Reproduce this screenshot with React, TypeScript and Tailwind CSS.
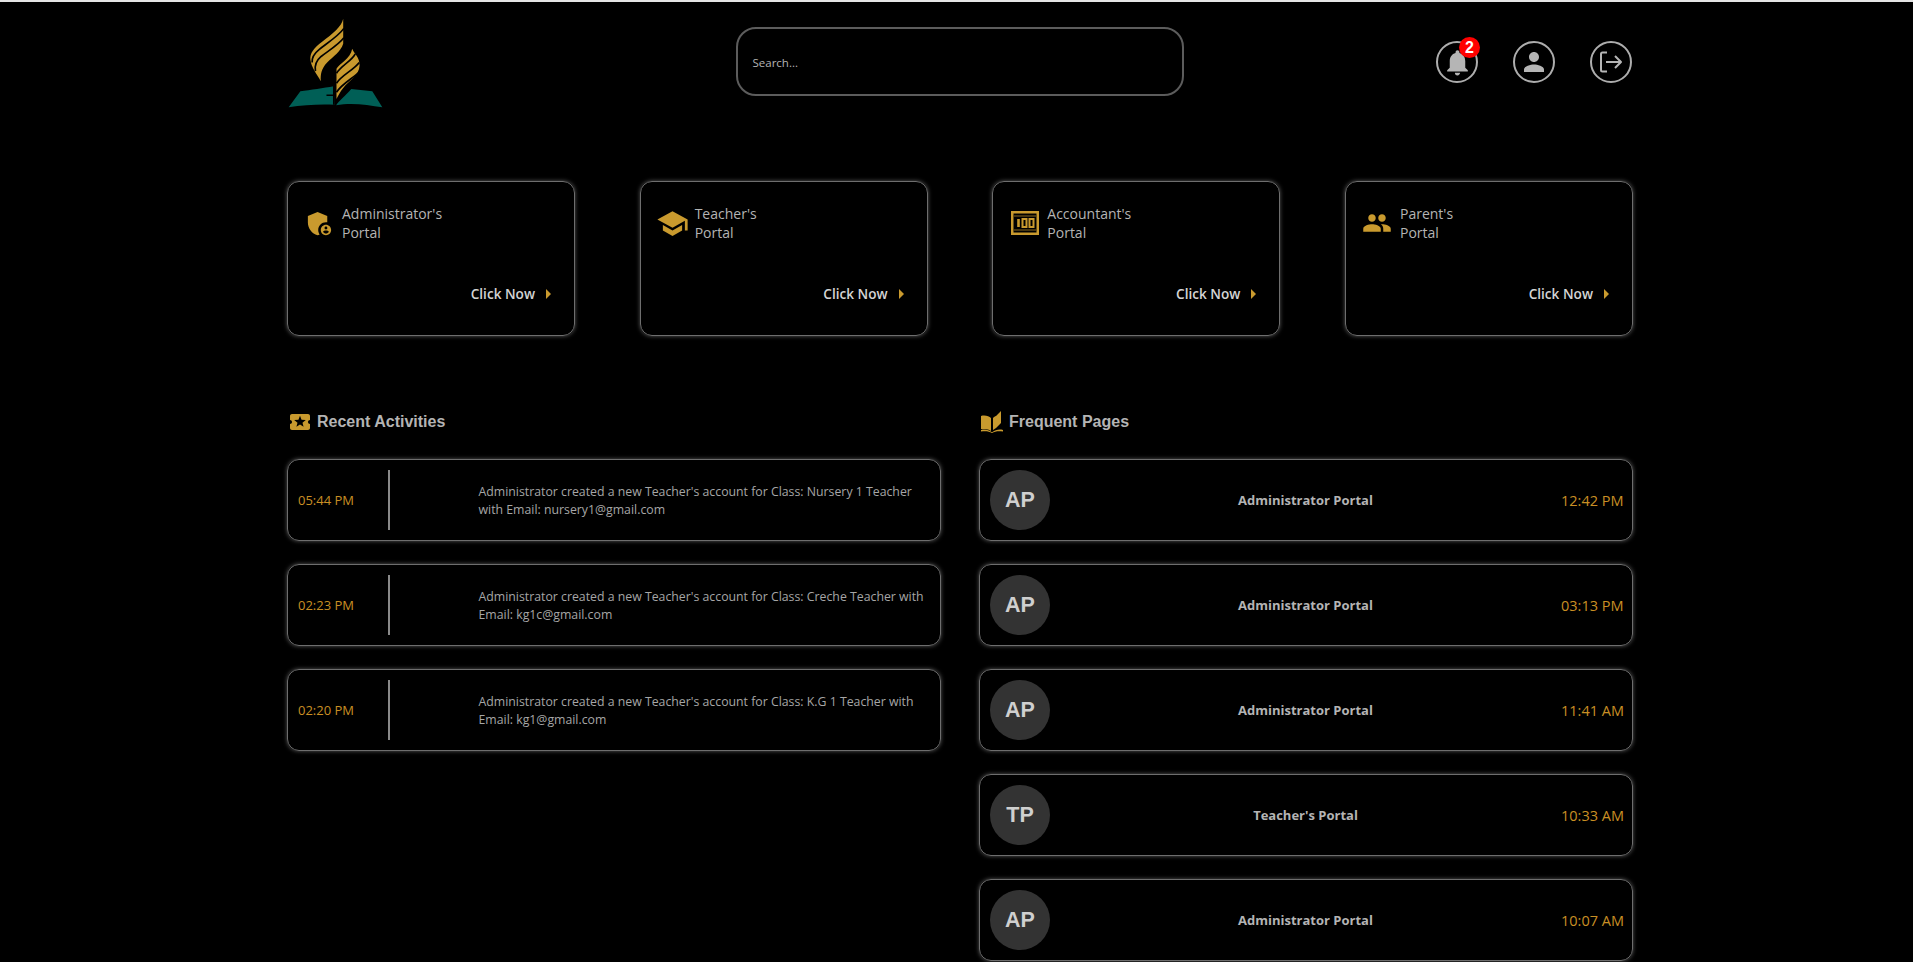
import React from "react";
import { MdAdminPanelSettings, MdSchool, MdPeople, MdLocalActivity, MdNotifications, MdPerson, MdArrowRight } from "react-icons/md";

const body = "font-['Open_Sans','Noto_Sans',sans-serif]";
const panel = "rounded-[12px] border border-[#6e6e6e] shadow-[0_0_4px_#5a5a5a]";

function Logo() {
  return (
    <svg viewBox="50 50 290 275" className="w-[97px] h-[92px]">
      <path fill="#c99a2e" d="M218 55C214 78 186 100 155 124C130 143 118 158 120 178C122 200 140 222 151 242C150 222 152 205 170 186C188 168 210 155 218 130Z" />
      <path fill="none" stroke="#000" strokeWidth="5" d="M220 84C205 106 170 128 145 148C130 160 124 172 125 186" />
      <path fill="none" stroke="#000" strokeWidth="5" d="M220 112C205 132 175 150 152 168C138 180 132 195 135 212" />
      <path fill="#c99a2e" d="M245 145C250 160 268 170 267 195C266 225 235 240 218 262C208 275 203 285 198 295L198 205C205 190 240 175 245 145Z" />
      <path fill="none" stroke="#000" strokeWidth="5" d="M254 160C245 180 212 195 198 218" />
      <path fill="none" stroke="#000" strokeWidth="5" d="M266 186C250 208 212 225 198 248" />
      <path fill="none" stroke="#000" strokeWidth="5" d="M268 212C250 232 215 248 198 275" />
      <path fill="#005f56" d="M55 320L90 272C120 268 160 262 190 257L192 312C150 310 100 312 55 320Z" />
      <path fill="#005f56" d="M197 314C205 300 225 285 242 265L305 272L335 320C290 312 240 305 197 314Z" />
      <path fill="none" stroke="#000" strokeWidth="5" d="M168 284H196M190 256V312" />
    </svg>
  );
}

function HundredIcon() {
  return (
    <svg viewBox="0 0 28 24" className="w-[28px] h-[24px] fill-none stroke-[#c99a2e]">
      <rect x="1.25" y="1.25" width="25.5" height="21.5" strokeWidth="2.5" />
      <path d="M3 5H25M3 19H25" strokeWidth="1" stroke="#8a6a20" />
      <path d="M7.5 8V16" strokeWidth="2.6" />
      <rect x="11.5" y="8" width="4" height="8" strokeWidth="2" />
      <rect x="18.5" y="8" width="4" height="8" strokeWidth="2" />
    </svg>
  );
}

function BookIcon() {
  return (
    <svg viewBox="0 0 24 22" className="w-[24px] h-[22px] fill-[#c99a2e]">
      <path d="M1 5C5 4 9 5 11 7V20C8 18 5 18 1 18Z" />
      <path d="M13 7C14 6 15 5 16 5L21 0V12L16 17L13 19Z" />
      <path d="M22 5H23V19C19 18 15 19 12.5 21H11.5C9 19 5 18 1 19V20.5C5 20 9 20 12 22C15 20 19 20 23 20.5V5Z" />
    </svg>
  );
}

function LogoutIcon() {
  return (
    <svg viewBox="0 0 24 24" className="w-[24px] h-[24px] fill-none stroke-[#b5b5b5]" strokeWidth="2" strokeLinejoin="round">
      <path d="M8 2.5H3.5A1.5 1.5 0 0 0 2 4V20A1.5 1.5 0 0 0 3.5 21.5H8" />
      <path d="M7 12H22M16 6L22 12L16 18" />
    </svg>
  );
}

function PortalCard({ icon, name }: { icon: React.ReactNode; name: string }) {
  return (
    <div className={`w-[288px] h-[155px] ${panel} pl-[18px] pr-[19px] pt-[22px] flex flex-col ${body}`}>
      <div className="flex items-start">
        <div className="w-[36px] h-[38px] flex items-center">{icon}</div>
        <div className="text-[14px] leading-[19px] text-[#b4b4b4]">
          <div>{name}</div>
          <div>Portal</div>
        </div>
      </div>
      <div className="mt-[40px] flex justify-end items-center">
        <span className="text-[13.6px] font-semibold text-[#d4d4d4]">Click Now</span>
        <MdArrowRight className="ml-[1px] mr-[-5px] text-[#c99a2e]" size={24} />
      </div>
    </div>
  );
}

function Activity({ time, text }: { time: string; text: string }) {
  return (
    <div className={`h-[82px] ${panel} flex items-center pl-[10px] pr-[9px] ${body}`}>
      <div className="w-[90px] pt-[1px] text-[13px] text-[#c98f24]">{time}</div>
      <div className="w-[2px] h-[60px] bg-[#8a8a8a]" />
      <div className="ml-[88.5px] flex-1 pt-[1px] text-[12.3px] leading-[18px] text-[#a6a6a6]">{text}</div>
    </div>
  );
}

function Frequent({ badge, title, time }: { badge: string; title: string; time: string }) {
  return (
    <div className={`h-[82px] shrink-0 ${panel} flex items-center pl-[10px] pr-[11px] ${body}`}>
      <div className="w-[60px] h-[60px] rounded-full bg-[#333333] flex items-center justify-center font-['Liberation_Sans',sans-serif] font-bold text-[21.5px] text-[#cfcfcf]">
        {badge}
      </div>
      <div className="flex-1 pt-[1px] text-center text-[13px] font-bold text-[#b4b4b4]">{title}</div>
      <div className="w-[60px] pt-[1px] text-right text-[14.5px] text-[#c98f24] whitespace-nowrap">{time}</div>
    </div>
  );
}

function RoundIcon({ children }: { children: React.ReactNode }) {
  return (
    <div className="relative w-[42px] h-[42px] rounded-full border-2 border-[#adadad] flex items-center justify-center text-[#b5b5b5]">
      {children}
    </div>
  );
}

export default function App() {
  const gold = "text-[#c99a2e]";
  return (
    <div className="h-screen overflow-hidden bg-black border-t-2 border-[#e4e4e4]">
      <div className="w-[1346px] ml-[287px]">
        <header className="h-[179px] flex items-start justify-between">
          <div className="mt-[15px]"><Logo /></div>
          <div className={`mt-[25px] ml-[99px] w-[448px] h-[69px] rounded-[20px] border-2 border-[#5c5c5c] flex items-center pl-[15px] pt-[3px] text-[11.5px] text-[#b4b4b4] ${body}`}>
            Search...
          </div>
          <div className="mt-[39px] mr-[1px] flex gap-[35px]">
            <RoundIcon>
              <MdNotifications size={31} />
              <span className="absolute top-[-6px] right-[-4px] w-[21px] h-[21px] rounded-full bg-[#ff0000] flex items-center justify-center text-white text-[16px] font-bold font-['Liberation_Sans',sans-serif]">2</span>
            </RoundIcon>
            <RoundIcon><MdPerson size={30} /></RoundIcon>
            <RoundIcon><LogoutIcon /></RoundIcon>
          </div>
        </header>

        <section className="flex justify-between">
          <PortalCard name="Administrator's" icon={<MdAdminPanelSettings size={31} className={`${gold} ml-[-2px]`} />} />
          <PortalCard name="Teacher's" icon={<MdSchool size={33} className={`${gold} ml-[-3px]`} />} />
          <PortalCard name="Accountant's" icon={<HundredIcon />} />
          <PortalCard name="Parent's" icon={<MdPeople size={30} className={`${gold} ml-[-2px]`} />} />
        </section>

        <section className="mt-[70px] grid grid-cols-[654px_654px] justify-between">
          <div>
            <h2 className="h-[32px] flex items-center gap-[5px] pl-[1px] font-['Liberation_Sans',sans-serif] font-bold text-[16px] text-[#b4b4b4]">
              <MdLocalActivity size={24} className={gold} /> Recent Activities
            </h2>
            <div className="mt-[21px] flex flex-col gap-[23px]">
              <Activity time="05:44 PM" text="Administrator created a new Teacher's account for Class: Nursery 1 Teacher with Email: nursery1@gmail.com" />
              <Activity time="02:23 PM" text="Administrator created a new Teacher's account for Class: Creche Teacher with Email: kg1c@gmail.com" />
              <Activity time="02:20 PM" text="Administrator created a new Teacher's account for Class: K.G 1 Teacher with Email: kg1@gmail.com" />
            </div>
          </div>
          <div>
            <h2 className="h-[32px] flex items-center gap-[5px] pl-[1px] font-['Liberation_Sans',sans-serif] font-bold text-[16px] text-[#b4b4b4]">
              <BookIcon /> Frequent Pages
            </h2>
            <div className="mt-[21px] flex flex-col gap-[23px]">
              <Frequent badge="AP" title="Administrator Portal" time="12:42 PM" />
              <Frequent badge="AP" title="Administrator Portal" time="03:13 PM" />
              <Frequent badge="AP" title="Administrator Portal" time="11:41 AM" />
              <Frequent badge="TP" title="Teacher's Portal" time="10:33 AM" />
              <Frequent badge="AP" title="Administrator Portal" time="10:07 AM" />
            </div>
          </div>
        </section>
      </div>
    </div>
  );
}
